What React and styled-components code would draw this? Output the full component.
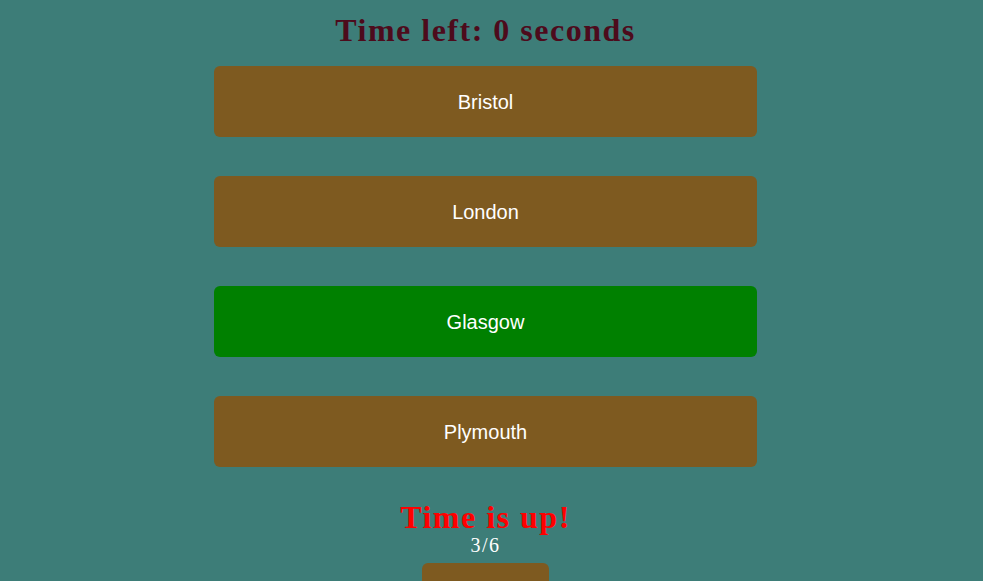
import React from "react";
import styled, { createGlobalStyle } from "styled-components";

const GlobalStyle = createGlobalStyle`
  html, body {
    margin: 0;
    padding: 0;
    background: #3d7d78;
  }
`;

const Page = styled.div`
  display: flex;
  flex-direction: column;
  align-items: center;
  padding: 12px 12px 0 0;
  font-family: "Liberation Serif", "Times New Roman", serif;
`;

const Timer = styled.h1`
  margin: 0 0 17px;
  font-size: 32px;
  font-weight: bold;
  letter-spacing: 1.5px;
  color: #4d0b1c;
`;

const Options = styled.div`
  display: flex;
  flex-direction: column;
  gap: 39px;
  width: 543px;
`;

const Option = styled.button`
  height: 71px;
  padding: 2px 0 0;
  border: none;
  border-radius: 6px;
  background: ${props => (props.correct ? "#008000" : "#7e5a20")};
  color: #ffffff;
  font-family: "Liberation Sans", Arial, sans-serif;
  font-size: 20px;
  cursor: pointer;
`;

const Result = styled.h1`
  margin: 34px 0 0;
  font-size: 32px;
  line-height: 33px;
  font-weight: bold;
  letter-spacing: 1.5px;
  color: #ff0000;
`;

const Score = styled.div`
  font-size: 20px;
  letter-spacing: 1.5px;
  color: #ffffff;
`;

const NextButton = styled.button`
  margin-top: 6px;
  width: 127px;
  height: 71px;
  border: none;
  border-radius: 6px;
  background: #7e5a20;
  color: #ffffff;
  font-family: "Liberation Sans", Arial, sans-serif;
  font-size: 20px;
`;

const answers = [
  { city: "Bristol" },
  { city: "London" },
  { city: "Glasgow", correct: true },
  { city: "Plymouth" },
];

function App() {
  return (
    <Page>
      <GlobalStyle />
      <Timer>Time left: 0 seconds</Timer>
      <Options>
        {answers.map(a => (
          <Option key={a.city} correct={a.correct}>
            {a.city}
          </Option>
        ))}
      </Options>
      <Result>Time is up!</Result>
      <Score>3/6</Score>
      <NextButton>Next</NextButton>
    </Page>
  );
}

export default App;
